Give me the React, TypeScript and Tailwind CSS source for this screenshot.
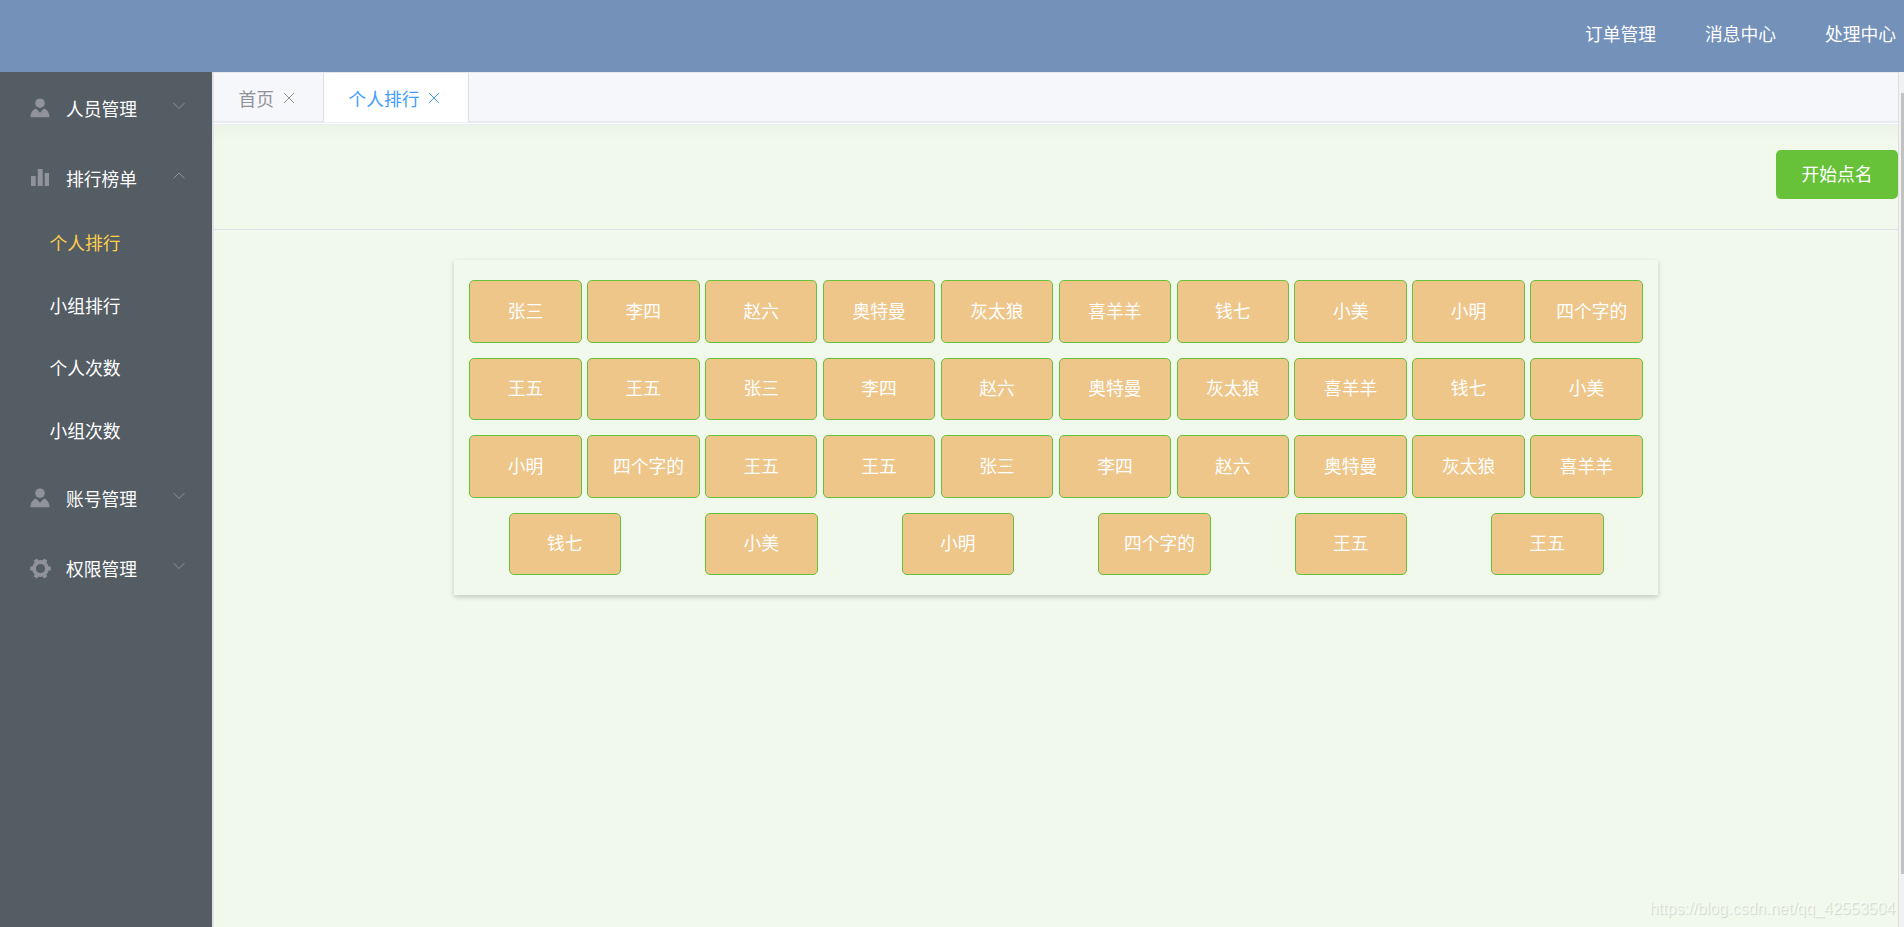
import { ReactNode } from "react";

const names = ["张三", "李四", "赵六", "奥特曼", "灰太狼", "喜羊羊", "钱七", "小美", "小明", "四个字的", "王五", "王五"];
const students = [...names, ...names, ...names];

const rows = [
  students.slice(0, 10),
  students.slice(10, 20),
  students.slice(20, 30),
  students.slice(30),
];

function UserIcon() {
  return (
    <svg className="w-5 h-5" viewBox="0 0 20 20" fill="currentColor">
      <circle cx="10" cy="5.2" r="4.8" />
      <path d="M.5 19.3c0-4.300 2-7.800 5.500-8.900L10 14.800l4-4.400c3.500 1.100 5.500 4.600 5.500 8.900z" />
    </svg>
  );
}

function ChartIcon() {
  return (
    <svg className="w-5 h-5" viewBox="0 0 20 20" fill="currentColor">
      <path d="M1 8h4.700v10H1zM7.700 1h5v17h-5zM14.700 5h4.300v13h-4.300z" />
    </svg>
  );
}

function GearIcon() {
  return (
    <svg className="w-[21px] h-[21px] shrink-0" viewBox="0 0 21 21" fill="none" stroke="currentColor">
      <circle cx="10.500" cy="10.500" r="6.500" strokeWidth="3.800" />
      <g strokeWidth="4">
        <path d="M.2 10.500h3.800M17 10.500h3.800" />
        <path d="M.2 10.500h3.800M17 10.500h3.800" transform="rotate(60 10.500 10.500)" />
        <path d="M.2 10.500h3.800M17 10.500h3.800" transform="rotate(120 10.500 10.500)" />
      </g>
    </svg>
  );
}

function Arrow({ open }: { open?: boolean }) {
  return (
    <svg className="w-3 h-2" viewBox="0 0 12 8" fill="none" stroke="#909399">
      <path d={open ? "M.5 6.500 6 1l5.500 5.500" : "M.5 1 6 6.500 11.500 1"} />
    </svg>
  );
}

function Close() {
  return (
    <svg className="w-3 h-3" viewBox="0 0 12 12" fill="none" stroke="currentColor">
      <path d="M1 1l10 10M11 1L1 11" />
    </svg>
  );
}

interface MenuProps {
  icon: ReactNode;
  title: string;
  open?: boolean;
}

function MenuTitle({ icon, title, open }: MenuProps) {
  return (
    <div className="flex items-center h-[70px] pl-[30px] pr-[27px] cursor-pointer">
      <span className="w-5 mt-0.5 flex justify-center text-[#909399]">{icon}</span>
      <span className="ml-4 mt-0.5 flex-1">{title}</span>
      <span className="mb-[3px]">
        <Arrow open={open} />
      </span>
    </div>
  );
}

export default function App() {
  return (
    <div className="h-[927px] w-[1904px] flex flex-col overflow-hidden bg-[#f0f9eb] text-[17.75px] leading-7 text-white font-['Noto_Sans_CJK_SC',sans-serif]">
      <header className="h-[72px] shrink-0 bg-[#7491ba] flex justify-end items-center gap-[49px] pr-2 pb-1.5">
        <span>订单管理</span>
        <span>消息中心</span>
        <span>处理中心</span>
      </header>

      <div className="flex flex-1 min-h-0">
        <aside className="w-[212px] shrink-0 bg-[#545c64]">
          <MenuTitle icon={<UserIcon />} title="人员管理" />
          <MenuTitle icon={<ChartIcon />} title="排行榜单" open />
          <ul className="pl-[49.5px] -mt-px mb-px leading-[62.5px] h-[250px]">
            <li className="text-[#ffd04b]">个人排行</li>
            <li>小组排行</li>
            <li>个人次数</li>
            <li>小组次数</li>
          </ul>
          <MenuTitle icon={<UserIcon />} title="账号管理" />
          <MenuTitle icon={<GearIcon />} title="权限管理" />
        </aside>

        <main className="flex-1 min-w-0 flex flex-col border-l-2 border-[#e2e3e6] relative">
          {/* tabs */}
          <div className="h-[50px] shrink-0 flex bg-[#f5f7fa] border-t border-[#e4e7ed] text-[#909399]">
            <div className="w-[110px] flex items-center gap-[9px] pl-[24.5px] pt-px border-r border-b border-r-[#dcdfe6] border-b-[#e4e7ed]">
              <span>首页</span>
              <Close />
            </div>
            <div className="w-[145px] flex items-center gap-2 pl-[24.5px] bg-white text-[#409eff] border-r border-[#dcdfe6]">
              <span>个人排行</span>
              <Close />
            </div>
            <div className="flex-1 border-b border-[#e4e7ed]" />
          </div>
          <div className="h-[3px] shrink-0 bg-white border-y border-[#ebeef5]" />

          <div className="h-[105px] shrink-0 flex justify-end items-start pt-[25px] border-b border-[#dcdfe6] bg-linear-to-b from-[#ebf4e7] to-[#f0f9eb] to-15%">
            <button className="w-[122px] h-[49px] pb-[3px] rounded-[5px] bg-[#67c23a]">开始点名</button>
          </div>

          {/* students */}
          <div className="w-[1204px] h-[335px] shrink-0 mt-[30px] ml-[240px] px-[12.5px] pt-5 flex flex-col gap-[15px] shadow-[0_2px_5px_rgba(0,0,0,0.2)]">
            {rows.map((row, i) => (
              <div key={i} className="flex justify-around">
                {row.map((name, j) => (
                  <button
                    key={j}
                    className="w-[112.5px] h-[62.5px] px-[25px] pb-[3px] rounded-[5px] border border-[#67c23a] bg-[#eec68a] whitespace-nowrap"
                  >
                    {name}
                  </button>
                ))}
              </div>
            ))}
          </div>

          <span className="absolute right-[3px] bottom-1.5 text-base text-white/70 [text-shadow:1px_1px_1px_#cdd5c9] font-['Liberation_Sans',sans-serif]">
            https://blog.csdn.net/qq_42553504
          </span>
        </main>

        {/* scrollbar */}
        <div className="w-[6px] shrink-0 bg-[#f1f1f1] border-l border-[#dcdfe6] pl-0.5 pt-[21px]">
          <div className="h-[781px] bg-[#c1c1c1]" />
        </div>
      </div>
    </div>
  );
}
